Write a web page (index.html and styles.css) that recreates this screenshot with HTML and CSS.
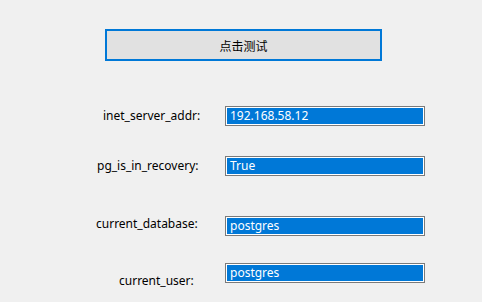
FILE: index.html
```html
<!DOCTYPE html>
<html lang="zh">
<head>
    <meta charset="UTF-8">
    <title>连接测试</title>
    <link rel="stylesheet" href="styles.css">
</head>
<body>
    <div class="form">
        <button class="test-btn">点击测试</button>

        <div class="row row-addr">
            <label class="lbl">inet_server_addr:</label>
            <div class="field">192.168.58.12</div>
        </div>
        <div class="row row-recovery">
            <label class="lbl">pg_is_in_recovery:</label>
            <div class="field">True</div>
        </div>
        <div class="row row-db">
            <label class="lbl">current_database:</label>
            <div class="field">postgres</div>
        </div>
        <div class="row row-user">
            <label class="lbl">current_user:</label>
            <div class="field">postgres</div>
        </div>
    </div>
</body>
</html>
```

FILE: styles.css
```css
html, body {
    margin: 0;
    padding: 0;
    background-color: #f0f0f0;
}

body {
    min-height: 100vh;
}

.form {
    font-family: "Noto Sans", "Noto Sans CJK SC", sans-serif;
    font-size: 12px;
    color: #000;
    padding-top: 29px;
    padding-bottom: 10px;
}

.test-btn {
    display: block;
    box-sizing: border-box;
    width: 277px;
    height: 32px;
    margin-left: 105px;
    border: 2px solid #0078d7;
    background-color: #e1e1e1;
    font-family: "Noto Sans CJK SC", sans-serif;
    font-size: 12px;
    color: #000;
    padding: 0;
}

.row {
    display: flex;
    align-items: flex-start;
}

.lbl {
    width: 225px;
    box-sizing: border-box;
    line-height: 20px;
    flex-shrink: 0;
}

.field {
    box-sizing: border-box;
    width: 200px;
    height: 20px;
    border: 1px solid #7a7a7a;
    box-shadow: inset 0 0 0 1px #fff;
    background-color: #0078d7;
    color: #fff;
    padding-left: 4px;
    line-height: 18px;
}

.row-addr {
    margin-top: 45px;
}

.row-addr .lbl {
    padding-left: 103px;
}

.row-recovery {
    margin-top: 30px;
}

.row-recovery .lbl {
    padding-left: 97px;
}

.row-db {
    margin-top: 40px;
}

.row-db .lbl {
    padding-left: 96px;
    margin-top: -2px;
}

.row-user {
    margin-top: 27px;
}

.row-user .lbl {
    padding-left: 119px;
    margin-top: 8px;
}
```
